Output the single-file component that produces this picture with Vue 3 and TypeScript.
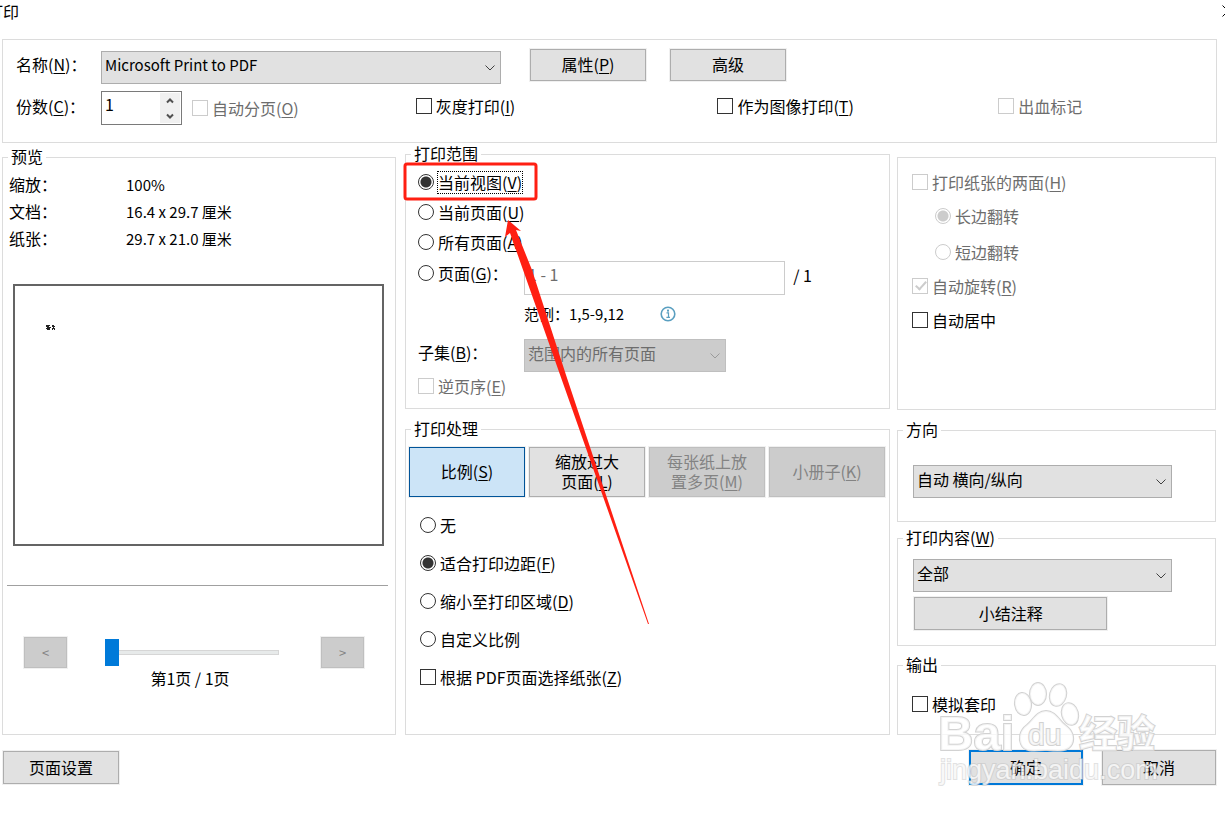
<script setup lang="ts">
import { ref } from 'vue'

interface Choice {
  value: string
  text: string
  key?: string
}

const copies = ref(1)
const range = ref('view')
const scaling = ref('fit')
const flip = ref('long')
const previewPage = ref(1)

const rangeChoices: Choice[] = [
  { value: 'view', text: '当前视图', key: 'V' },
  { value: 'page', text: '当前页面', key: 'U' },
  { value: 'all', text: '所有页面', key: 'A' },
]

const scalingChoices: Choice[] = [
  { value: 'none', text: '无' },
  { value: 'fit', text: '适合打印边距', key: 'F' },
  { value: 'shrink', text: '缩小至打印区域', key: 'D' },
  { value: 'custom', text: '自定义比例' },
]

const previewFacts = [
  { name: '缩放：', value: '100%' },
  { name: '文档：', value: '16.4 x 29.7 厘米' },
  { name: '纸张：', value: '29.7 x 21.0 厘米' },
]

function step(by: number) {
  copies.value = Math.max(1, copies.value + by)
}
</script>

<template>
  <main class="dialog">
    <header class="titlebar">
      <h1>打印</h1>
      <button class="close" type="button" aria-label="关闭">
        <svg viewBox="0 0 12 12" width="12" height="12"><path d="M0.5 0.5L11.5 11.5M11.5 0.5L0.5 11.5" /></svg>
      </button>
    </header>

    <section class="panel printer">
      <div class="printer-row">
        <label class="field-label" for="printer">名称(<u>N</u>)：</label>
        <span class="combo printer-combo">
          <select id="printer"><option>Microsoft Print to PDF</option></select>
          <svg class="chevron" viewBox="0 0 10 6" width="10" height="6"><path d="M0.5 0.5L5 5L9.5 0.5" /></svg>
        </span>
        <button class="btn" type="button">属性(<u>P</u>)</button>
        <button class="btn" type="button">高级</button>
      </div>
      <div class="printer-options">
        <label class="field-label" for="copies">份数(<u>C</u>)：</label>
        <div class="copies">
          <span class="spinner">
            <input id="copies" v-model.number="copies" type="number" min="1" />
            <span class="steps">
              <button type="button" aria-label="增加" @click="step(1)">
                <svg viewBox="0 0 8 6" width="8" height="6"><path d="M1 4.5L4 1.5L7 4.5" /></svg>
              </button>
              <button type="button" aria-label="减少" @click="step(-1)">
                <svg viewBox="0 0 8 6" width="8" height="6"><path d="M1 1.5L4 4.5L7 1.5" /></svg>
              </button>
            </span>
          </span>
          <label class="choice off"><input type="checkbox" disabled /><span>自动分页(<u>O</u>)</span></label>
        </div>
        <label class="choice"><input type="checkbox" /><span>灰度打印(<u>I</u>)</span></label>
        <label class="choice"><input type="checkbox" /><span>作为图像打印(<u>T</u>)</span></label>
        <label class="choice off"><input type="checkbox" disabled /><span>出血标记</span></label>
      </div>
    </section>

    <div class="columns">
      <fieldset class="group preview">
        <legend>预览</legend>
        <dl class="facts">
          <div v-for="fact in previewFacts" :key="fact.name">
            <dt>{{ fact.name }}</dt>
            <dd>{{ fact.value }}</dd>
          </div>
        </dl>
        <div class="sheet">
          <svg class="sheet-ink" viewBox="0 0 9 5" width="9" height="5">
            <path d="M0 0h4v1h-1v1h2v1h-1v2h-3v-1h-1v-1h1v-1h-1zM6 0h2v1h1v1h-1v1h1v2h-1v-1h-1v1h-1v-2h1v-1h-1z" />
          </svg>
        </div>
        <hr />
        <div class="pager">
          <button class="btn" type="button" disabled aria-label="上一页">&lt;</button>
          <input v-model.number="previewPage" type="range" min="1" max="2" aria-label="预览页" />
          <button class="btn" type="button" disabled aria-label="下一页">&gt;</button>
        </div>
        <p class="page-count">第1页 / 1页</p>
      </fieldset>

      <div class="middle">
        <fieldset class="group range">
          <legend>打印范围</legend>
          <label v-for="c in rangeChoices" :key="c.value" class="choice range-choice">
            <input v-model="range" type="radio" name="range" :value="c.value" />
            <span :class="{ focused: range === c.value }">{{ c.text }}(<u>{{ c.key }}</u>)</span>
          </label>
          <div class="range-grid">
            <label class="choice pages-choice">
              <input v-model="range" type="radio" name="range" value="pages" />
              <span>页面(<u>G</u>)：</span>
            </label>
            <div class="pages">
              <input type="text" value="1 - 1" disabled aria-label="页面范围" />
              <span>/ 1</span>
            </div>
            <div class="example">
              <span>范例：1,5-9,12</span>
              <svg viewBox="0 0 16 16" width="16" height="16">
                <circle cx="8" cy="8" r="6.8" fill="#fff" stroke="#5a9fc0" stroke-width="1.6" />
                <path d="M6.5 6.8h2v4.2M6.4 11.4h3.6" fill="none" stroke="#5a9fc0" stroke-width="1.2" />
                <rect x="7" y="3.6" width="2" height="2" fill="#5a9fc0" />
              </svg>
            </div>
            <label class="subset-label" for="subset">子集(<u>B</u>)：</label>
            <span class="combo off subset">
              <select id="subset" disabled><option>范围内的所有页面</option></select>
              <svg class="chevron" viewBox="0 0 10 6" width="10" height="6"><path d="M0.5 0.5L5 5L9.5 0.5" /></svg>
            </span>
          </div>
          <label class="choice off reverse"><input type="checkbox" disabled /><span>逆页序(<u>E</u>)</span></label>
        </fieldset>

        <fieldset class="group handling">
          <legend>打印处理</legend>
          <div class="modes">
            <button class="btn active" type="button">比例(<u>S</u>)</button>
            <button class="btn" type="button">缩放过大<br />页面(<u>L</u>)</button>
            <button class="btn" type="button" disabled>每张纸上放<br />置多页(<u>M</u>)</button>
            <button class="btn" type="button" disabled>小册子(<u>K</u>)</button>
          </div>
          <label v-for="c in scalingChoices" :key="c.value" class="choice">
            <input v-model="scaling" type="radio" name="scaling" :value="c.value" />
            <span>{{ c.text }}<template v-if="c.key">(<u>{{ c.key }}</u>)</template></span>
          </label>
          <label class="choice"><input type="checkbox" /><span>根据 PDF页面选择纸张(<u>Z</u>)</span></label>
        </fieldset>

        <svg class="callout" viewBox="0 0 260 490" width="260" height="490" aria-hidden="true">
          <rect x="0" y="20" width="131" height="35" rx="2" fill="none" stroke="#ff1f12" stroke-width="3" />
          <path d="M103 76L100 93L105 89L243 480H244L161 231L127 126L111 86L116 87Z" fill="#ff1f12" />
        </svg>
      </div>

      <div class="side">
        <section class="panel duplex">
          <label class="choice off"><input type="checkbox" disabled /><span>打印纸张的两面(<u>H</u>)</span></label>
          <label class="choice off nested">
            <input v-model="flip" type="radio" name="flip" value="long" disabled /><span>长边翻转</span>
          </label>
          <label class="choice off nested">
            <input v-model="flip" type="radio" name="flip" value="short" disabled /><span>短边翻转</span>
          </label>
          <label class="choice off"><input type="checkbox" checked disabled /><span>自动旋转(<u>R</u>)</span></label>
          <label class="choice"><input type="checkbox" /><span>自动居中</span></label>
        </section>

        <fieldset class="group orientation">
          <legend><label for="orientation">方向</label></legend>
          <span class="combo">
            <select id="orientation"><option>自动 横向/纵向</option></select>
            <svg class="chevron" viewBox="0 0 10 6" width="10" height="6"><path d="M0.5 0.5L5 5L9.5 0.5" /></svg>
          </span>
        </fieldset>

        <fieldset class="group content">
          <legend><label for="content">打印内容(<u>W</u>)</label></legend>
          <span class="combo">
            <select id="content"><option>全部</option></select>
            <svg class="chevron" viewBox="0 0 10 6" width="10" height="6"><path d="M0.5 0.5L5 5L9.5 0.5" /></svg>
          </span>
          <button class="btn summary" type="button">小结注释</button>
        </fieldset>

        <fieldset class="group output">
          <legend>输出</legend>
          <label class="choice"><input type="checkbox" /><span>模拟套印</span></label>
        </fieldset>
      </div>
    </div>

    <footer class="actions">
      <button class="btn setup" type="button">页面设置</button>
      <button class="btn primary" type="button">确定</button>
      <button class="btn cancel" type="button">取消</button>
      <svg class="watermark" viewBox="0 0 240 120" width="240" height="120" aria-hidden="true">
        <g class="mark">
          <ellipse cx="93" cy="29" rx="8" ry="11" transform="rotate(-8 93 29)" />
          <ellipse cx="108" cy="19" rx="8" ry="11" />
          <ellipse cx="128" cy="20" rx="8" ry="11" transform="rotate(15 128 20)" />
          <ellipse cx="140" cy="39" rx="8" ry="11" transform="rotate(-15 140 39)" />
          <path d="M116 36C107 36 103 45 97 50C89 56 89 64 91 69C94 77 103 76 116 75C129 76 138 77 142 69C145 62 142 55 135 50C129 45 125 36 116 36Z" />
          <text x="8" y="75" font-size="49">Bai</text>
          <text class="du" x="98" y="70" font-size="30">du</text>
          <text x="149" y="72" font-size="38">经验</text>
        </g>
        <text class="address" x="10" y="104" font-size="27">jingyan.baidu.com</text>
      </svg>
    </footer>
  </main>
</template>

<style>
body {
  margin: 0;
  background: #fff;
}
</style>

<style scoped>
.dialog {
  box-sizing: border-box;
  min-height: 100vh;
  padding: 0 9px 24px 2px;
  overflow: hidden;
  color: #000;
  font-family: "Noto Sans CJK SC", "Open Sans", sans-serif;
  font-size: 16px;
  line-height: 20px;
}

.dialog *,
.dialog *::before {
  box-sizing: border-box;
}

button,
input,
select {
  margin: 0;
  font: inherit;
  color: inherit;
}

u {
  text-underline-offset: 2px;
  text-decoration-thickness: 1px;
}

.titlebar {
  display: flex;
  justify-content: space-between;
  height: 39px;
  margin: 0 -18px 0 -15px;
}

h1 {
  margin: 1px 0 0;
  font-size: 16px;
  font-weight: inherit;
}

.close {
  display: flex;
  align-self: flex-start;
  padding: 5px 0;
  border: 0;
  background: none;
}

.close path {
  stroke: #000;
}

.panel {
  border: 1px solid #dcdcdc;
}

.printer {
  padding: 9px 13px 17px;
  margin-right: -1px;
}

.printer-row {
  display: flex;
  align-items: flex-start;
}

.field-label {
  flex: 0 0 85px;
  padding-top: 5px;
}

.printer-combo {
  flex: 0 1 400px;
  margin: 2px 29px 0 0;
}

.printer-combo select {
  font-size: 15px;
}

.printer-row .btn {
  flex: 0 0 116px;
  height: 32px;
  margin-right: 24px;
}

.printer-options {
  display: grid;
  grid-template-columns: 85px 315fr 302fr 281fr 205fr;
  margin-top: 7px;
}

.printer-options > .choice {
  align-self: flex-start;
  margin-top: 5px;
}

.copies {
  display: flex;
  align-items: center;
  gap: 10px;
}

.spinner {
  display: flex;
  width: 81px;
  height: 34px;
  border: 1px solid #7a7a7a;
  background: #fff;
}

.spinner input {
  flex: 1;
  min-width: 0;
  padding: 0 0 8px 3px;
  border: 0;
  appearance: textfield;
}

.spinner input::-webkit-inner-spin-button {
  display: none;
}

.steps {
  display: flex;
  flex-direction: column;
  width: 20px;
  margin: 1px;
  background: #f0f0f0;
}

.steps button {
  display: flex;
  flex: 1;
  align-items: center;
  justify-content: center;
  padding: 0;
  border: 0;
  background: none;
}

.steps path {
  fill: none;
  stroke: #505050;
  stroke-width: 2;
}

.btn {
  padding: 0 0 2px;
  border: 1px solid #adadad;
  background: #e1e1e1;
  box-shadow: 0 0 0 1px #f0f0f0;
}

.btn:disabled {
  border-color: #bfbfbf;
  background: #ccc;
  color: #838383;
}

.btn.active {
  border-color: #005499;
  background: #cce4f7;
}

.combo {
  position: relative;
  display: block;
}

.combo select {
  display: block;
  width: 100%;
  height: 33px;
  padding: 0 24px 6px 3px;
  border: 1px solid #adadad;
  border-radius: 0;
  appearance: none;
  background: #e1e1e1;
  opacity: 1;
}

.combo.off select {
  border-color: #bfbfbf;
  background: #ccc;
  color: #6d6d6d;
}

.chevron {
  position: absolute;
  top: 14px;
  right: 6px;
  fill: none;
  stroke: #404040;
  pointer-events: none;
}

.combo.off .chevron {
  stroke: #9a9a9a;
}

.choice {
  display: flex;
  align-items: center;
  gap: 4px;
  height: 20px;
  white-space: nowrap;
}

.choice span {
  padding-bottom: 1px;
}

.choice input {
  flex: none;
  width: 16px;
  height: 16px;
  border: 1px solid #333;
  appearance: none;
  background: #fff;
}

.choice input[type="radio"] {
  border-radius: 50%;
}

.choice input[type="radio"]:checked {
  background: radial-gradient(circle, #333 5px, #fff 6px);
}

.choice.off {
  color: #6d6d6d;
}

.choice.off input {
  border-color: #ccc;
}

.choice.off input[type="radio"]:checked {
  background: radial-gradient(circle, #ccc 5px, #fff 6px);
}

.choice input[type="checkbox"]:checked::before {
  content: "";
  display: block;
  width: 6px;
  height: 11px;
  margin: 0 0 0 5px;
  border: solid #ccc;
  border-width: 0 2px 2px 0;
  transform: rotate(42deg);
}

.columns {
  display: grid;
  grid-template-columns: 394fr 487fr 319fr;
  gap: 7px;
  margin-top: 1px;
}

.group {
  min-width: 0;
  margin: 0;
  padding: 0;
  border: 1px solid #dcdcdc;
}

legend {
  height: 20px;
  margin-left: 5px;
  padding: 0 3px;
  line-height: 18px;
}

.preview {
  margin-top: 3px;
}

.facts {
  margin: 4px 0 0 6px;
}

.facts div {
  display: grid;
  grid-template-columns: 117px 1fr;
  line-height: 27px;
}

dd {
  margin: 0;
  font-size: 15px;
}

.sheet {
  aspect-ratio: 371 / 262;
  margin: 32px 11px 0 10px;
  padding: 39px 31px;
  border: 2px solid #646464;
}

.sheet-ink {
  display: block;
  fill: #222;
}

hr {
  margin: 39px 7px 0 4px;
  border: 0;
  border-top: 1px solid #a0a0a0;
}

.pager {
  display: flex;
  align-items: center;
  margin: 51px 31px 0 21px;
}

.pager .btn {
  flex: 0 0 43px;
  height: 31px;
  padding: 0;
  font-size: 13px;
}

.pager input {
  flex: 1;
  min-width: 0;
  height: 28px;
  margin: 0 42px 0 38px;
  appearance: none;
  background: none;
}

.pager input::-webkit-slider-runnable-track {
  height: 5px;
  border: 1px solid #d6d6d6;
  background: #e7eaea;
}

.pager input::-webkit-slider-thumb {
  width: 14px;
  height: 27px;
  margin: -12px 0 0 -1px;
  appearance: none;
  background: #007ad9;
}

.page-count {
  margin: 0 18px 46px 0;
  text-align: center;
}

.middle {
  position: relative;
  display: flex;
  flex-direction: column;
  gap: 10px;
  padding-left: 2px;
}

.range {
  padding-bottom: 12px;
}

.range .choice,
.subset-label {
  margin-left: 12px;
}

.range-choice {
  height: 30px;
}

.range-choice:first-of-type {
  margin-top: 3px;
}

.focused {
  outline: 1px dotted #000;
}

.range-grid {
  display: grid;
  grid-template-columns: 118px 1fr;
  margin-top: 4px;
}

.range .pages-choice {
  height: 24px;
}

.pages {
  display: flex;
  gap: 8px;
  margin-right: 77px;
}

.pages input {
  flex: 1;
  min-width: 0;
  height: 34px;
  padding: 0 0 8px 3px;
  border: 1px solid #ccc;
  background: #fff;
  color: #6d6d6d;
}

.pages span {
  padding-top: 4px;
}

.example {
  display: flex;
  grid-column: 2;
  gap: 36px;
  align-items: center;
  height: 24px;
  margin: 7px 0 13px;
  font-size: 15px;
}

.subset-label {
  padding-top: 3px;
}

.subset {
  width: 202px;
}

.reverse {
  margin-top: 4px;
}

.handling {
  flex: 1;
}

.handling .choice {
  height: 38px;
  margin-left: 14px;
}

.modes {
  display: grid;
  grid-template-columns: repeat(4, 1fr);
  gap: 4px;
  margin: 8px 4px 9px 3px;
}

.modes .btn {
  height: 50px;
}

.callout {
  position: absolute;
  top: 0;
  left: 2px;
  overflow: visible;
  pointer-events: none;
}

.side {
  display: flex;
  flex-direction: column;
  padding-top: 13px;
}

.duplex {
  display: flex;
  flex: 1;
  flex-direction: column;
  gap: 14px;
  padding: 14px;
}

.nested {
  margin-left: 23px;
}

.nested + .nested {
  margin-top: 2px;
}

.side .combo {
  margin: 0 43px 0 15px;
}

.orientation {
  margin: 10px 0 6px;
  padding: 25px 0 23px;
}

.content {
  margin-bottom: 9px;
  padding: 11px 0 15px;
}

.content .summary {
  display: block;
  width: 61%;
  height: 33px;
  margin: 5px 0 0 16px;
}

.output .choice {
  margin: 19px 14px 20px;
}

.actions {
  position: relative;
  display: flex;
  align-items: center;
  gap: 19px;
  padding: 15px 0 0 1px;
}

.setup {
  width: 116px;
  height: 33px;
  margin-right: auto;
}

.primary,
.cancel {
  width: 114px;
  height: 35px;
}

.primary {
  border: 2px solid #0078d7;
}

.watermark {
  position: absolute;
  right: 46px;
  bottom: -10px;
  font-family: "Liberation Sans", "Noto Sans CJK SC", sans-serif;
  pointer-events: none;
}

.mark {
  fill: rgba(255, 255, 255, 0.75);
  stroke: #d2d2d2;
  stroke-width: 2;
  font-weight: 700;
  paint-order: stroke;
}

.mark .du {
  font-weight: 400;
}

.address {
  fill: rgba(255, 255, 255, 0.75);
  stroke: rgba(190, 190, 190, 0.45);
  stroke-width: 2;
  paint-order: stroke;
}
</style>
